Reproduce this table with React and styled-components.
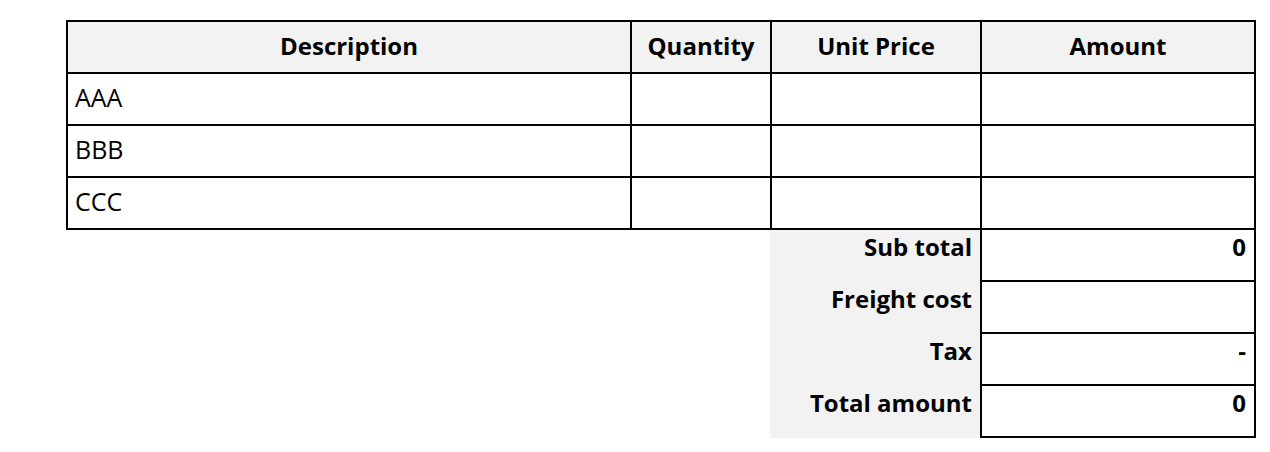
import React from "react";
import styled, { createGlobalStyle } from "styled-components";

const Global = createGlobalStyle`
  html, body { margin: 0; padding: 0; background: #ffffff; }
  body { font-family: "Open Sans", "Liberation Sans", sans-serif; color: #000; }
`;

const Page = styled.div`
  padding: 20px 0 0 66px;
  width: 1190px;
`;

const COLS = "562px 138px 208px 272px";

const Grid = styled.div`
  display: grid;
  grid-template-columns: ${COLS};
  gap: 2px;
  padding: 2px;
  background: #000;
`;

const Cell = styled.div`
  background: ${(p) => (p.$head ? "#f2f2f2" : "#fff")};
  height: 50px;
  display: flex;
  align-items: center;
  justify-content: ${(p) => (p.$head ? "center" : "flex-start")};
  padding: ${(p) => (p.$head ? "0 8px 3px 8px" : "0 8px 5px 7px")};
  font-size: ${(p) => (p.$head ? "24px" : "25px")};
  font-weight: ${(p) => (p.$head ? 700 : 400)};
  box-sizing: border-box;
  white-space: nowrap;
`;

const Summary = styled.div`
  display: grid;
  grid-template-columns: 704px 210px 276px;
`;

const Spacer = styled.div``;

const Labels = styled.div`
  background: #f2f2f2;
  display: grid;
  grid-template-rows: repeat(4, 52px);
  height: 208px;
`;

const Label = styled.div`
  font-size: 24px;
  font-weight: 700;
  text-align: right;
  padding: 0 8px 0 0;
  white-space: nowrap;
`;

const Values = styled.div`
  display: grid;
  grid-template-rows: repeat(4, 50px);
  gap: 2px;
  padding: 0 2px 2px 2px;
  background: #000;
  align-self: start;
`;

const Value = styled.div`
  background: #fff;
  font-size: 24px;
  font-weight: 700;
  text-align: right;
  padding: 0 8px 0 0;
`;

const headers = ["Description", "Quantity", "Unit Price", "Amount"];
const rows = ["AAA", "BBB", "CCC"];
const summary = [
  ["Sub total", "0"],
  ["Freight cost", ""],
  ["Tax", "-"],
  ["Total amount", "0"],
];

export default function App() {
  return (
    <>
      <Global />
      <Page>
        <Grid>
          {headers.map((h) => (
            <Cell key={h} $head>
              {h}
            </Cell>
          ))}
          {rows.map((r) => (
            <React.Fragment key={r}>
              <Cell>{r}</Cell>
              <Cell />
              <Cell />
              <Cell />
            </React.Fragment>
          ))}
        </Grid>
        <Summary>
          <Spacer />
          <Labels>
            {summary.map(([l]) => (
              <Label key={l}>{l}</Label>
            ))}
          </Labels>
          <Values>
            {summary.map(([l, v]) => (
              <Value key={l}>{v}</Value>
            ))}
          </Values>
        </Summary>
      </Page>
    </>
  );
}
